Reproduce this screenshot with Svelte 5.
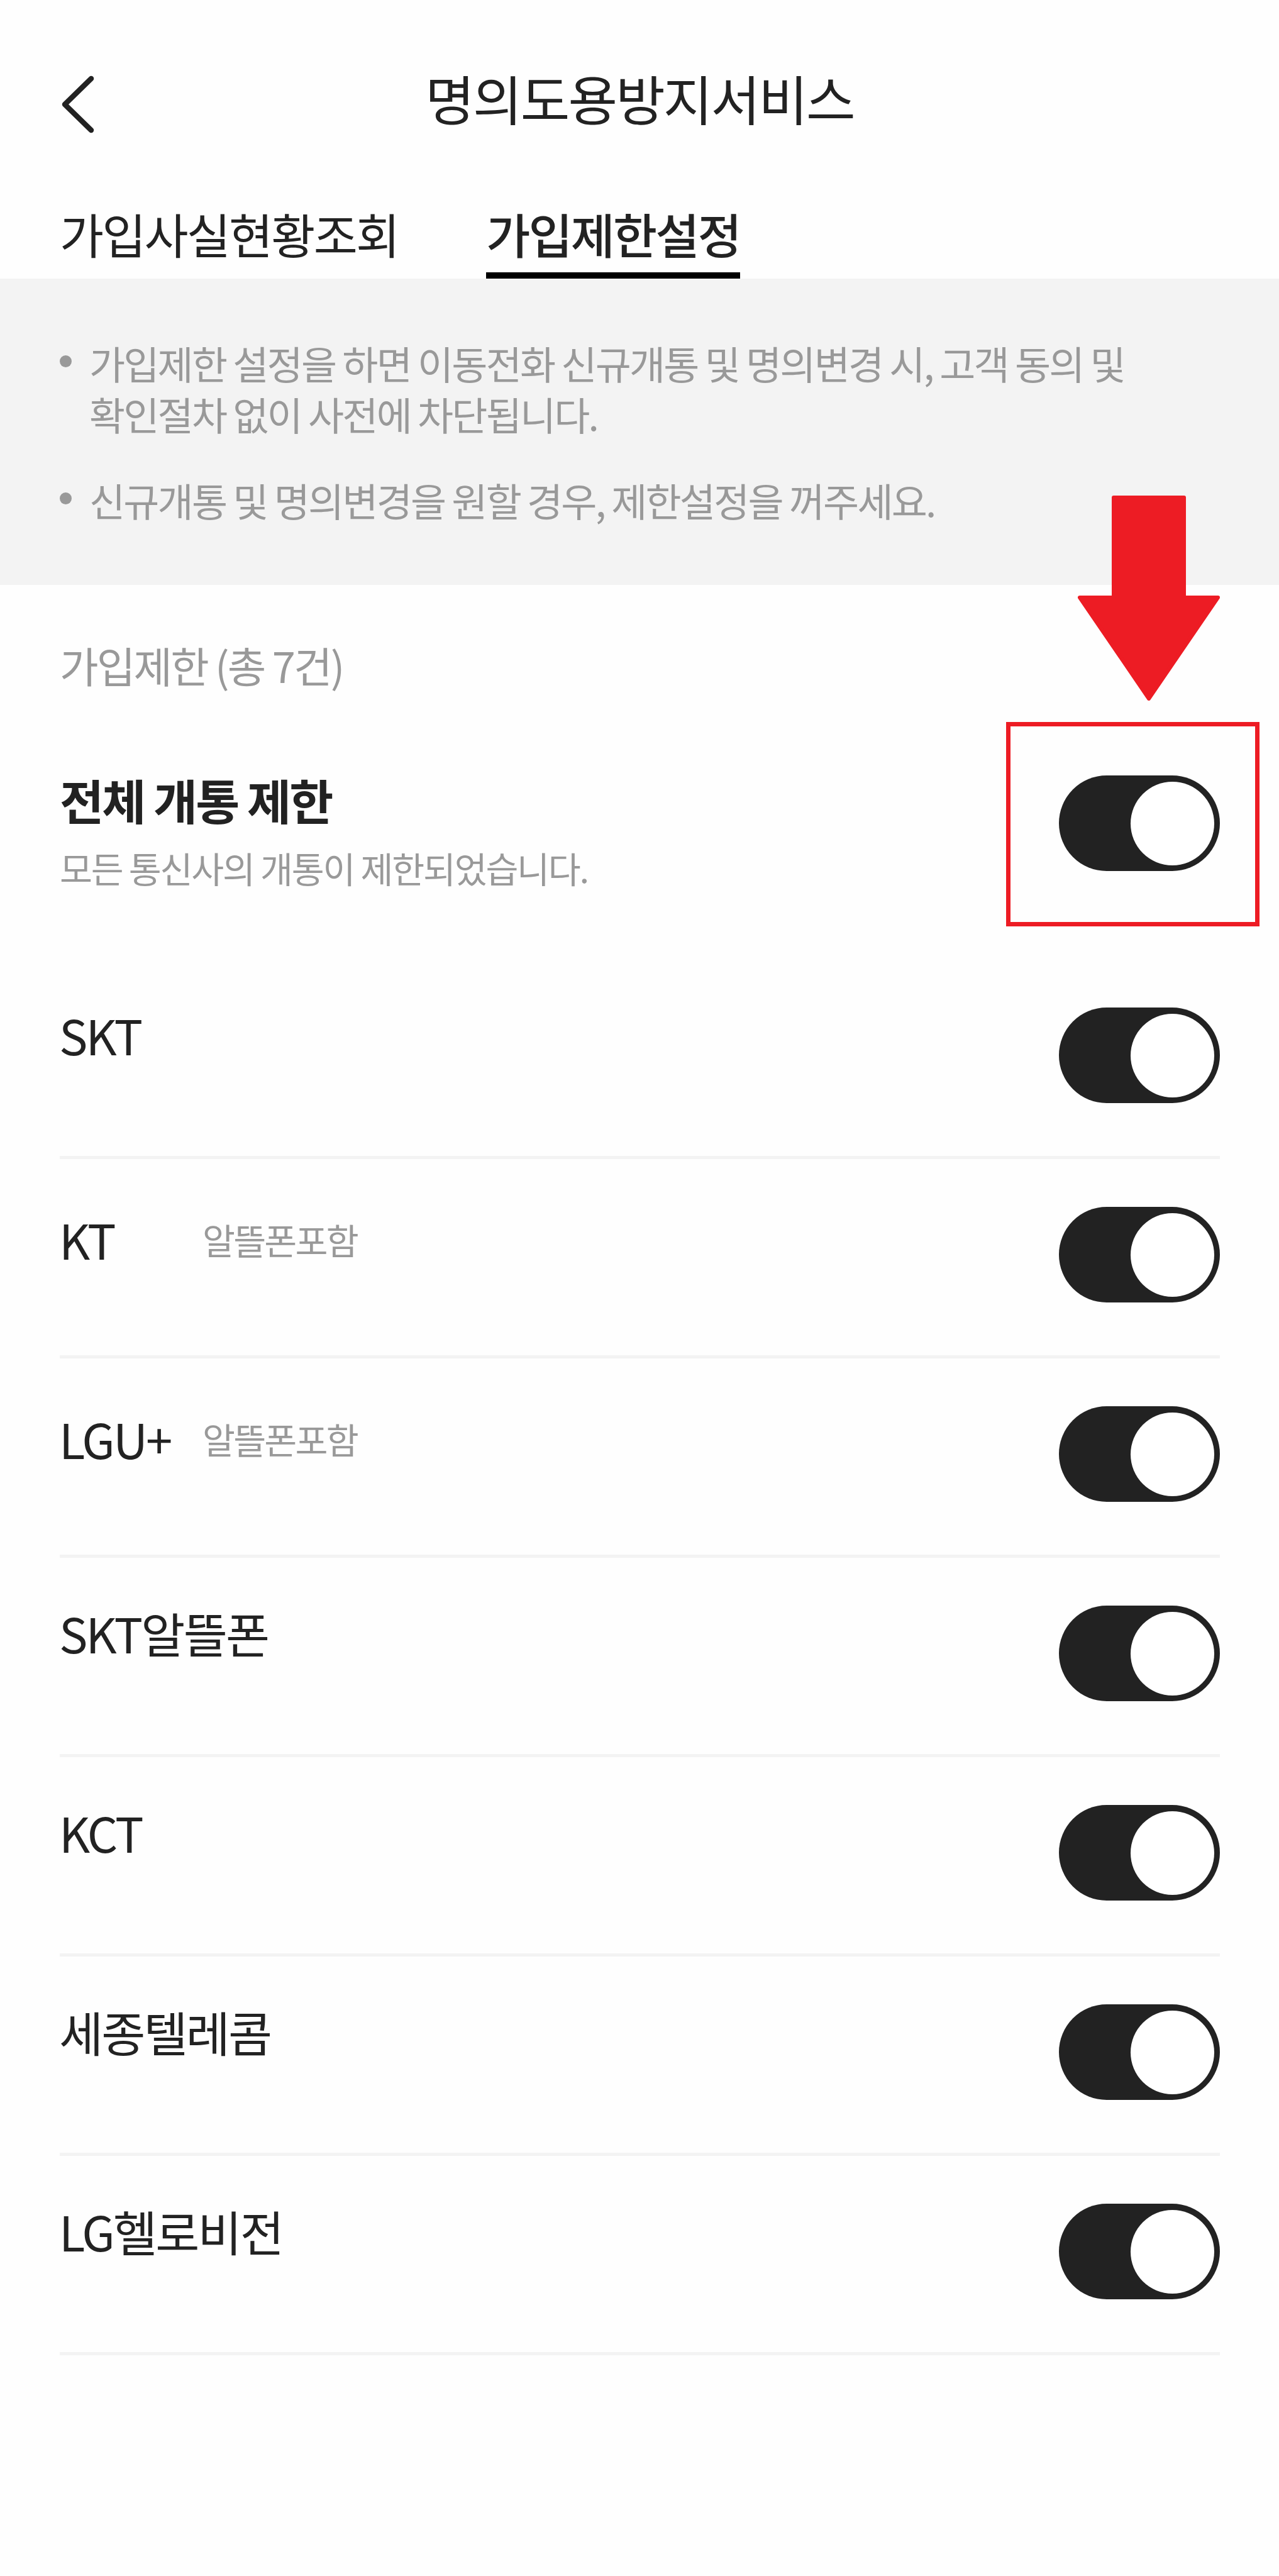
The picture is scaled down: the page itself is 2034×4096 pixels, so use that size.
<script lang="ts">
    interface Carrier {
        name: string;
        note?: string;
        blocked: boolean;
    }

    const tabs = ["가입사실현황조회", "가입제한설정"];
    const notices = [
        "가입제한 설정을 하면 이동전화 신규개통 및 명의변경 시, 고객 동의 및 확인절차 없이 사전에 차단됩니다.",
        "신규개통 및 명의변경을 원할 경우, 제한설정을 꺼주세요.",
    ];

    let activeTab = $state(1);
    let carriers: Carrier[] = $state([
        { name: "SKT", blocked: true },
        { name: "KT", note: "알뜰폰포함", blocked: true },
        { name: "LGU+", note: "알뜰폰포함", blocked: true },
        { name: "SKT알뜰폰", blocked: true },
        { name: "KCT", blocked: true },
        { name: "세종텔레콤", blocked: true },
        { name: "LG헬로비전", blocked: true },
    ]);

    const allBlocked = $derived(carriers.every((c) => c.blocked));

    function toggleAll() {
        const next = !allBlocked;
        carriers.forEach((c) => (c.blocked = next));
    }
</script>

{#snippet toggle(on: boolean, label: string, onclick: () => void)}
    <button
        class="toggle"
        class:on
        role="switch"
        aria-checked={on}
        aria-label={label}
        {onclick}
    ></button>
{/snippet}

<div class="page">
    <header>
        <button class="back" aria-label="뒤로">
            <svg viewBox="0 0 52 92">
                <path d="M47 5 L5 46 L47 87" />
            </svg>
        </button>
        <h1>명의도용방지서비스</h1>
    </header>

    <nav>
        {#each tabs as tab, i}
            <button
                class="tab"
                class:active={activeTab === i}
                onclick={() => (activeTab = i)}
            >
                {tab}
            </button>
        {/each}
    </nav>

    <ul class="notices">
        {#each notices as notice}
            <li>{notice}</li>
        {/each}
    </ul>

    <main>
        <p class="count">가입제한 (총 {carriers.length}건)</p>

        <section class="all">
            <div>
                <h2>전체 개통 제한</h2>
                <p>모든 통신사의 개통이 제한되었습니다.</p>
            </div>
            <div class="spot">
                {@render toggle(allBlocked, "전체 개통 제한", toggleAll)}
                <div class="frame"></div>
                <svg class="arrow" viewBox="0 0 226 326">
                    <path
                        d="M57 3 H169 V162 H223 L113 323 L3 162 H57 Z"
                    />
                </svg>
            </div>
        </section>

        {#each carriers as carrier}
            <section class="row" class:noted={carrier.note}>
                <span class="name">{carrier.name}</span>
                <span class="note">{carrier.note ?? ""}</span>
                {@render toggle(
                    carrier.blocked,
                    carrier.name,
                    () => (carrier.blocked = !carrier.blocked),
                )}
            </section>
        {/each}
    </main>
</div>

<style>
    :global(body) {
        background: #fefefe;
    }

    .page {
        box-sizing: border-box;
        width: 2034px;
        height: 4096px;
        overflow: hidden;
        background: #fefefe;
        color: #222;
        font-family: "Noto Sans CJK KR", sans-serif;
        letter-spacing: -2.82px;
    }

    button {
        padding: 0;
        border: 0;
        background: none;
        color: inherit;
        font: inherit;
        letter-spacing: inherit;
        cursor: pointer;
    }

    h1,
    h2,
    p,
    ul {
        margin: 0;
        padding: 0;
        font-weight: 400;
    }

    header {
        display: grid;
        grid-template-columns: 95px 1fr 95px;
        align-items: center;
        height: 300px;
    }

    .back {
        grid-column: 1 / 3;
        grid-row: 1;
        justify-self: start;
        z-index: 1;
        width: 52px;
        height: 92px;
        margin: 32px 0 0 98px;
    }

    .back svg {
        display: block;
        fill: none;
        stroke: #222;
        stroke-width: 8.5;
        stroke-linecap: round;
        stroke-linejoin: round;
    }

    h1 {
        grid-column: 1 / 4;
        grid-row: 1;
        padding-top: 11px;
        font-size: 85.4px;
        line-height: 123px;
        text-align: center;
    }

    nav {
        display: flex;
        gap: 140px;
        height: 143px;
        padding-left: 95px;
    }

    .tab {
        font-size: 76.2px;
        line-height: 143px;
        white-space: nowrap;
    }

    .tab.active {
        font-weight: 500;
        box-shadow: inset 0 -10px #000;
    }

    .notices {
        box-sizing: border-box;
        height: 487px;
        padding: 94px 220px 0 95px;
        background: #f3f3f3;
        color: #999;
        font-size: 62.1px;
        line-height: 81px;
        list-style: none;
        word-break: keep-all;
    }

    li {
        position: relative;
        margin-bottom: 56px;
        padding-left: 47px;
    }

    li::before {
        content: "";
        position: absolute;
        top: 28px;
        left: 0;
        width: 19px;
        height: 19px;
        border-radius: 50%;
        background: #999;
    }

    main {
        padding: 0 94px 0 95px;
    }

    .count {
        padding-top: 77px;
        color: #999;
        font-size: 66.9px;
        line-height: 100px;
    }

    .all {
        display: flex;
        justify-content: space-between;
        height: 419px;
    }

    h2 {
        padding-top: 109px;
        font-size: 76.2px;
        font-weight: 700;
        line-height: 110px;
    }

    .all p {
        padding-top: 11px;
        color: #999;
        font-size: 56.5px;
        line-height: 84px;
        letter-spacing: -2.27px;
    }

    .spot {
        position: relative;
        padding-top: 126px;
    }

    .frame {
        position: absolute;
        top: 41px;
        right: -63px;
        box-sizing: border-box;
        width: 403px;
        height: 325px;
        border: 7px solid #ed1c24;
        pointer-events: none;
    }

    .arrow {
        position: absolute;
        top: -319px;
        right: 0;
        width: 226px;
        height: 326px;
        fill: #ed1c24;
        stroke: #ed1c24;
        stroke-width: 6;
        stroke-linejoin: round;
    }

    .row {
        display: grid;
        grid-template-columns: 227px 1fr 256px;
        box-sizing: border-box;
        height: 317px;
        padding-top: 64px;
        border-bottom: 5px solid #f3f3f3;
        line-height: 110px;
        white-space: nowrap;
    }

    .name {
        margin-left: -1px;
        font-size: 76.2px;
    }

    .note {
        color: #999;
        font-size: 56.5px;
    }

    .noted .name,
    .noted .note {
        padding-top: 8px;
    }

    .toggle {
        position: relative;
        display: block;
        width: 256px;
        height: 152px;
        border-radius: 76px;
        background: #ccc;
    }

    .row .toggle {
        margin-top: 12px;
    }

    .toggle::after {
        content: "";
        position: absolute;
        top: 9.5px;
        left: 9.5px;
        width: 133px;
        height: 133px;
        border-radius: 50%;
        background: #fff;
    }

    .toggle.on {
        background: #222;
    }

    .toggle.on::after {
        left: 113.5px;
    }
</style>
